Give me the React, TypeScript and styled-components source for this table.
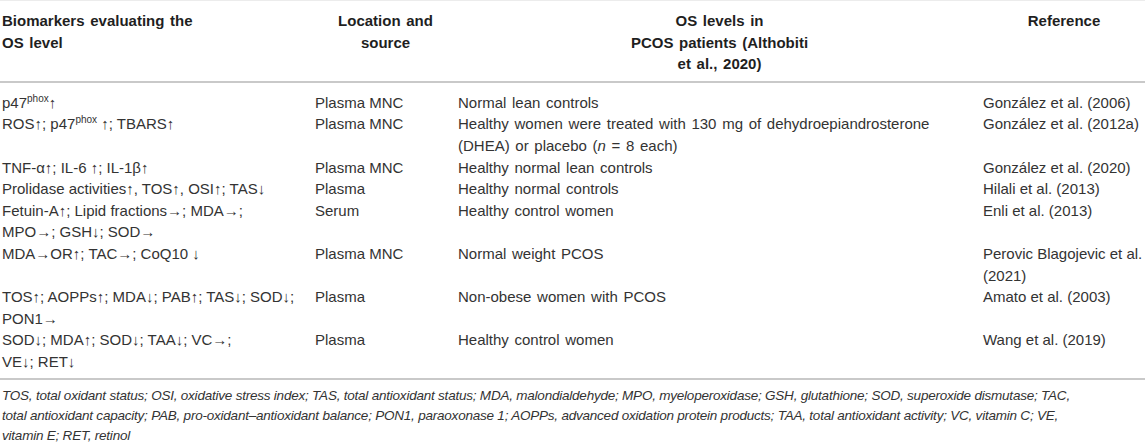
import React from "react";
import styled, { createGlobalStyle } from "styled-components";

const Global = createGlobalStyle`
  html, body { margin: 0; padding: 0; background: #ffffff; }
  body { font-family: "Liberation Sans", Arial, sans-serif; }
`;

const Wrap = styled.div`
  width: 1145px;
  background: #fff;
`;

const Table = styled.table`
  width: 1145px;
  border-collapse: collapse;
  table-layout: fixed;
  border-top: 1px solid #ececec;
`;

const Th = styled.th<{ $align?: string }>`
  font-weight: bold;
  font-size: 15px;
  line-height: 21.6px;
  word-spacing: 1.5px;
  color: #1f1f1f;
  text-align: ${(p) => p.$align || "left"};
  vertical-align: top;
  padding: 9px 0 6px 2px;
  border-bottom: 2px solid #c9c9c9;
`;

const Td = styled.td<{ $first?: boolean; $last?: boolean; $spaced?: boolean }>`
  font-size: 15px;
  line-height: 21.6px;
  word-spacing: ${(p) => (p.$spaced ? "1.5px" : "0")};
  white-space: nowrap;
  color: #333;
  vertical-align: top;
  text-align: left;
  padding: ${(p) => (p.$first ? "9px" : "0")} 0 ${(p) => (p.$last ? "5px" : "0")} 2px;
  border-bottom: ${(p) => (p.$last ? "2px solid #c9c9c9" : "none")};
`;

const Sup = styled.sup`
  font-size: 10px;
  line-height: 0;
  vertical-align: 6px;
`;

const Foot = styled.p`
  margin: 0;
  padding: 6px 0 0 2px;
  font-size: 13.5px;
  line-height: 20px;
  font-style: italic;
  color: #333;
  letter-spacing: -0.22px;
  white-space: nowrap;
`;

type Row = { a: React.ReactNode; b: string; c: React.ReactNode; d: React.ReactNode };

const rows: Row[] = [
  { a: <>p47<Sup>phox</Sup>↑</>, b: "Plasma MNC", c: "Normal lean controls", d: "González et al. (2006)" },
  {
    a: <>ROS↑; p47<Sup>phox</Sup> ↑; TBARS↑</>,
    b: "Plasma MNC",
    c: <>Healthy women were treated with 130 mg of dehydroepiandrosterone<br />(DHEA) or placebo (<i>n</i> = 8 each)</>,
    d: "González et al. (2012a)",
  },
  { a: "TNF-α↑; IL-6 ↑; IL-1β↑", b: "Plasma MNC", c: "Healthy normal lean controls", d: "González et al. (2020)" },
  { a: "Prolidase activities↑, TOS↑, OSI↑; TAS↓", b: "Plasma", c: "Healthy normal controls", d: "Hilali et al. (2013)" },
  { a: <>Fetuin-A↑; Lipid fractions→; MDA→;<br />MPO→; GSH↓; SOD→</>, b: "Serum", c: "Healthy control women", d: "Enli et al. (2013)" },
  { a: "MDA→OR↑; TAC→; CoQ10 ↓", b: "Plasma MNC", c: "Normal weight PCOS", d: <>Perovic Blagojevic et al.<br />(2021)</> },
  { a: <>TOS↑; AOPPs↑; MDA↓; PAB↑; TAS↓; SOD↓;<br />PON1→</>, b: "Plasma", c: "Non-obese women with PCOS", d: "Amato et al. (2003)" },
  { a: <>SOD↓; MDA↑; SOD↓; TAA↓; VC→;<br />VE↓; RET↓</>, b: "Plasma", c: "Healthy control women", d: "Wang et al. (2019)" },
];

export default function App() {
  return (
    <Wrap>
      <Global />
      <Table>
        <colgroup>
          <col style={{ width: 313 }} />
          <col style={{ width: 143 }} />
          <col style={{ width: 525 }} />
          <col style={{ width: 164 }} />
        </colgroup>
        <thead>
          <tr>
            <Th>Biomarkers evaluating the<br />OS level</Th>
            <Th $align="center">Location and<br />source</Th>
            <Th $align="center">OS levels in<br />PCOS patients (Althobiti<br />et al., 2020)</Th>
            <Th $align="center">Reference</Th>
          </tr>
        </thead>
        <tbody>
          {rows.map((r, i) => {
            const first = i === 0;
            const last = i === rows.length - 1;
            return (
              <tr key={i}>
                <Td $first={first} $last={last}>{r.a}</Td>
                <Td $first={first} $last={last}>{r.b}</Td>
                <Td $first={first} $last={last} $spaced>{r.c}</Td>
                <Td $first={first} $last={last}>{r.d}</Td>
              </tr>
            );
          })}
        </tbody>
      </Table>
      <Foot>
        TOS, total oxidant status; OSI, oxidative stress index; TAS, total antioxidant status; MDA, malondialdehyde; MPO, myeloperoxidase; GSH, glutathione; SOD, superoxide dismutase; TAC,
        <br />
        total antioxidant capacity; PAB, pro-oxidant–antioxidant balance; PON1, paraoxonase 1; AOPPs, advanced oxidation protein products; TAA, total antioxidant activity; VC, vitamin C; VE,
        <br />
        vitamin E; RET, retinol
      </Foot>
    </Wrap>
  );
}
